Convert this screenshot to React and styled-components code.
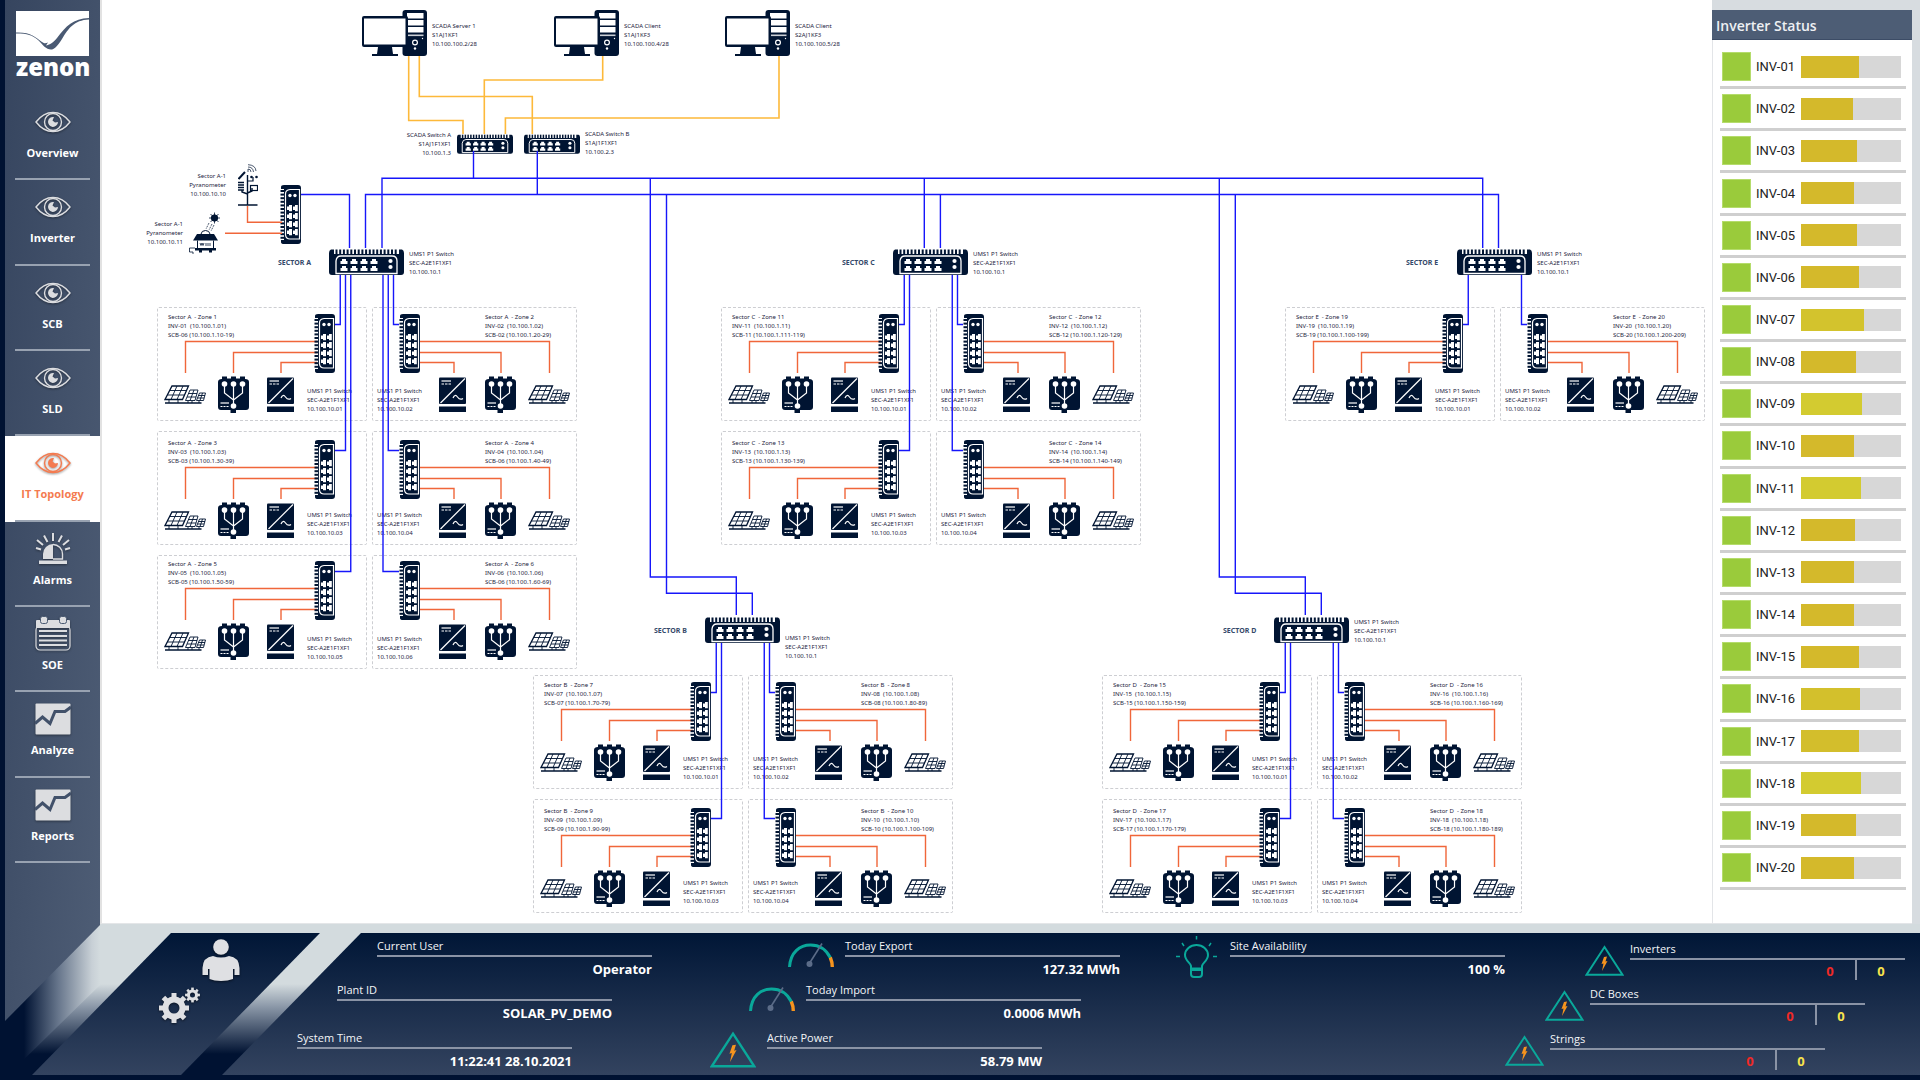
import React, { useState } from 'react';
import styled, { createGlobalStyle } from 'styled-components';

const NAVY = '#001432';
const ORANGE = '#f0663a';
const TEAL = '#0aa89a';

const GlobalStyle = createGlobalStyle`
  * { box-sizing: border-box; }
  body {
    margin: 0;
    background: #fff;
    font-family: 'Open Sans', 'Noto Sans', sans-serif;
  }
  button {
    border: 0;
    padding: 0;
    background: none;
    font: inherit;
    color: inherit;
    cursor: pointer;
  }
  svg { display: block; }
`;

const Shell = styled.div`
  display: grid;
  grid-template-columns: 100px minmax(0, 1fr) 208px;
  grid-template-rows: 1fr 156px;
  min-height: 100vh;
`;

/* ---------- sidebar ---------- */

const Sidebar = styled.aside`
  grid-column: 1;
  grid-row: 1 / 3;
  z-index: 1;
  position: relative;
  border-left: 5px solid #001232;

  &::before {
    content: '';
    position: absolute;
    inset: 0;
    z-index: -1;
    background: linear-gradient(95deg, #36455f, #4f5e76);
    clip-path: polygon(0 0, 100% 0, 100% calc(100% - 155px), 0 calc(100% - 59px));
  }
`;

const Brand = styled.div`
  height: 95px;
  padding: 11px 11px 0;
`;

const BrandName = styled.div`
  color: #fff;
  font-size: 24px;
  font-weight: 800;
  line-height: 20px;
  text-align: center;
`;

const Nav = styled.nav`
  display: flex;
  flex-direction: column;
  height: 768px;
`;

const NavItem = styled.button`
  flex: 1;
  display: flex;
  flex-direction: column;
  align-items: center;
  padding-top: 10px;
  font-size: 11px;
  font-weight: 700;
  line-height: 18px;
  color: ${({ $active }) => ($active ? '#f47b50' : '#fff')};
  background: ${({ $active }) => ($active ? '#fff' : 'transparent')};
`;

const NavIcon = styled.span`
  display: flex;
  align-items: center;
  height: 34px;
  margin-bottom: 5px;
  color: ${({ $active }) => ($active ? '#f47b50' : '#dcdde0')};
  filter: drop-shadow(0 1px 1px rgba(0, 0, 0, 0.4));
`;

const NavRule = styled.span`
  width: 75px;
  height: 2px;
  margin-top: auto;
  background: #98a2b1;
`;

/* ---------- topology ---------- */

const Stage = styled.main`
  position: relative;
  overflow: hidden;
  border-left: 2px solid #e2e2e2;
  border-bottom: 1px solid #e4e6e8;
  color: #1c2340;
  font-family: 'Noto Sans', sans-serif;
  font-size: 6px;
  line-height: 9px;
`;

const Wires = styled.svg`
  position: absolute;
  left: 0;
  top: 0;
  width: 100%;
  height: 100%;
  fill: none;
  stroke-width: 1.4;
  pointer-events: none;
`;

const Node = styled.div`
  position: absolute;
  left: ${({ $x }) => $x}px;
  top: ${({ $y }) => $y}px;
`;

const Caption = styled(Node)`
  white-space: pre;
  text-align: ${({ $right }) => ($right ? 'right' : 'left')};
  width: ${({ $right }) => ($right ? '80px' : 'auto')};
`;

const SectorName = styled(Node)`
  color: #34496a;
  font-size: 7px;
  font-weight: 700;
`;

const ZoneBox = styled(Node)`
  width: ${({ $w }) => $w}px;
  height: 114px;
  border: 1px dashed #cdced2;
  border-radius: 2px;
`;

const ZoneWires = styled.svg`
  position: absolute;
  left: 0;
  top: 0;
  fill: none;
  stroke: ${ORANGE};
  stroke-width: 1.4;
`;

/* ---------- inverter status ---------- */

const StatusColumn = styled.aside`
  padding: 10px 8px 0 0;
  background: #d7dce0;
`;

const StatusPanel = styled.section`
  height: 100%;
  background: #fff;
  border-left: 1px solid #e3e5e8;
  border-bottom: 1px solid #e3e5e8;
`;

const StatusTitle = styled.h2`
  margin: 0 0 0 -1px;
  height: 30px;
  padding-left: 4px;
  background: #4d5d75;
  border-bottom: 1px solid #3c4c66;
  color: #eef0f3;
  font-size: 14px;
  font-weight: 600;
  line-height: 31px;
`;

const StatusList = styled.ul`
  display: flex;
  flex-direction: column;
  height: 843px;
  margin: 7px 6px 0 7px;
  padding: 0;
  list-style: none;
`;

const StatusRow = styled.li`
  flex: 1;
  display: flex;
  align-items: center;
  padding: 0 5px 0 2px;
  border-bottom: 3px solid #cfcfcf;
`;

const Lamp = styled.span`
  width: 29px;
  height: 29px;
  background: #9acb3b;
  border: 1px solid #b5dc6c;
`;

const InverterName = styled.span`
  width: 50px;
  padding-left: 5px;
  font-family: Roboto, sans-serif;
  font-size: 13px;
  color: #222;
`;

const Track = styled.span`
  flex: 1;
  height: 22px;
  background: #d7d7d7;
`;

const Fill = styled.span`
  display: block;
  height: 100%;
  background: ${({ $tone }) => $tone};
`;

/* ---------- footer ---------- */

const Footer = styled.footer`
  grid-column: 1 / 4;
  grid-row: 2;
  position: relative;
  display: flex;
  padding-top: 9px;
  border-bottom: 5px solid #001232;
  background: linear-gradient(180deg, #d3dbde 0, #d3dbde 60px, #8794a5 84px, #001232 130px);

  &::before {
    content: '';
    position: absolute;
    left: 0;
    top: 0;
    width: 100px;
    height: 151px;
    background: linear-gradient(90deg, #001232 24px, #66758b 58px, #c8d0d6 92px, #d3dbde 100px);
    clip-path: polygon(0 0, 100% 0, 100% 61px, 12px 147px, 0 100%);
  }
`;

const Slab = styled.div`
  background: linear-gradient(180deg, #001636, #33435f);
`;

const Actions = styled(Slab)`
  flex: none;
  width: 288px;
  margin-left: 32px;
  display: flex;
  flex-direction: column;
  align-items: flex-start;
  gap: 6px;
  padding: 6px 0 0 127px;
  clip-path: polygon(139px 0, 100% 0, 149px 100%, 0 100%);
`;

const ActionButton = styled.button`
  margin-left: ${({ $indent }) => $indent}px;
  filter: drop-shadow(0 1px 1px rgba(0, 0, 0, 0.5));
`;

const Readings = styled(Slab)`
  flex: 1;
  display: flex;
  margin-left: -98px;
  padding: 3px 15px 0 75px;
  clip-path: polygon(139px 0, 100% 0, 100% 100%, 0 100%);
`;

const Group = styled.div`
  display: grid;
  grid-template-rows: 44px 48px 44px;
  align-content: start;
  margin-right: ${({ $gap }) => $gap}px;
`;

const CounterGroup = styled.div`
  display: grid;
  grid-template-rows: 45px 45px 45px;
  align-content: start;
  margin-left: auto;
  padding-top: 3px;
`;

const Reading = styled.div`
  display: flex;
  margin-left: ${({ $indent }) => $indent}px;
`;

const ReadingIcon = styled.span`
  display: flex;
  align-items: center;
  justify-content: center;
  width: ${({ $w }) => $w}px;
  height: ${({ $h }) => $h}px;
  margin-right: ${({ $gap }) => $gap}px;
`;

const Field = styled.div`
  width: 275px;
  color: #f3f5f8;
`;

const FieldLabel = styled.div`
  height: 21px;
  border-bottom: 2px solid #8a93a5;
  font-size: 11px;
  line-height: 20px;
`;

const FieldValue = styled.div`
  color: #fff;
  font-size: 13px;
  font-weight: 700;
  line-height: 24px;
  text-align: right;
`;

const Counters = styled.div`
  display: flex;
  justify-content: flex-end;
`;

const Counter = styled.div`
  width: 50px;
  height: 20px;
  border-left: ${({ $divided }) => ($divided ? '2px solid #8a93a5' : '0')};
  color: ${({ $color }) => $color};
  font-size: 13px;
  font-weight: 700;
  line-height: 23px;
  text-align: center;
`;

/* ---------- navigation icons ---------- */

const EyeIcon = () => (
  <svg width="36" height="22" viewBox="0 0 36 22" fill="none" stroke="currentColor" strokeWidth="1.4">
    <path d="M1 11C6 4.500 12 1.500 18 1.500S30 4.500 35 11C30 17.500 24 20.500 18 20.500S6 17.500 1 11Z" />
    <circle cx="18" cy="11" r="8.500" />
    <path d="M19 6A5 5 0 1 0 23 11L20 11.500L17.500 9.500Z" fill="currentColor" stroke="none" />
  </svg>
);

const AlarmIcon = () => (
  <svg width="36" height="32" viewBox="0 0 36 32" fill="none" stroke="currentColor" strokeWidth="2">
    <path d="M18 0V8M9 2.500L12.500 9M27 2.500L23.500 9M2 7L8 12M34 7L28 12M1 15L6 16.500M35 15L30 16.500" />
    <path d="M8 26V21A10 10 0 0 1 18 11V26Z" fill="currentColor" stroke="none" />
    <path d="M18 11.500A9.500 9.500 0 0 1 27.500 21V26H18" strokeWidth="1.400" />
    <path d="M4 27.500H32V31H4Z" fill="currentColor" stroke="none" />
  </svg>
);

const SoeIcon = () => (
  <svg width="36" height="35" viewBox="0 0 36 35">
    <path d="M1 5Q1 4 2 4H34Q35 4 35 5V12H1Z" fill="currentColor" />
    <rect x="1" y="10" width="34" height="24" rx="4" fill="none" stroke="currentColor" strokeWidth="1.200" />
    <path d="M4 15H32M4 20H32M4 24.500H32M4 29H32" stroke="currentColor" strokeWidth="2" />
    <rect x="5.500" y="0.500" width="7" height="7" rx="2" fill="currentColor" stroke="#4a5a72" />
    <rect x="24.500" y="0.500" width="7" height="7" rx="2" fill="currentColor" stroke="#4a5a72" />
  </svg>
);

const TrendIcon = () => (
  <svg width="36" height="32" viewBox="0 0 36 32">
    <rect x="0.500" y="0.500" width="35" height="31" rx="1" fill="currentColor" />
    <path d="M0 20.500L7.500 14L15 20.500L20 8.500H30L36 4" fill="none" stroke="#42516a" strokeWidth="3" />
  </svg>
);

const BrandMark = () => (
  <svg width="73" height="46" viewBox="0 0 73 46">
    <rect width="73" height="45" fill="#fff" />
    <path
      d="M0 21.500C15 21 19 26 26 31C29 33 30 32 32 31.500L30 34.500C33 34 37 32 41 27C50 15 57 7.500 73 7V8.500C58 9 52 18 46 28C41 36 38 38.500 35 38.500C30 38.500 27 34 22 29C16 24 12 22.500 0 22.500Z"
      fill="#4a5a73"
    />
  </svg>
);

/* ---------- device drawings ---------- */

const Computer = () => (
  <svg width="65" height="46" viewBox="0 0 65 46" fill={NAVY}>
    <rect x="40.500" width="24.500" height="46" rx="3" />
    <g fill="#fff">
      <rect x="45" y="3" width="16.500" height="5.500" />
      <rect x="45" y="10" width="16.500" height="5.500" />
      <rect x="45" y="17" width="16.500" height="5.500" />
      <rect x="45" y="24.500" width="16.500" height="1.600" opacity="0.8" />
      <circle cx="60.500" cy="28.500" r="0.700" />
      <circle cx="53" cy="38.500" r="1.200" />
    </g>
    <circle cx="53" cy="32.500" r="2.400" fill="none" stroke="#fff" strokeWidth="1.200" />
    <rect y="6" width="46" height="31" rx="2" />
    <rect x="2" y="8.500" width="41.500" height="26" fill="#fff" />
    <path d="M16 37H30L31 44H36V46H10V44H15Z" />
  </svg>
);

const FINS = Array.from({ length: 17 }, (_, i) => i);

const RackSwitch = ({ width = 75, height = 26 }) => (
  <svg width={width} height={height} viewBox="0 0 75 26" fill={NAVY}>
    <path d="M2 0.500H5V5H70V0.500H73Q75 1 75 4V23Q75 26 72 26H3Q0 26 0 23V4Q0 1 2 0.500Z" />
    {FINS.map((i) => (
      <rect key={i} x={6.5 + i * 3.7} y="0.500" width="2" height="5" />
    ))}
    <path d="M7 24.500V12Q7.500 7 12 7H63Q68 7 68 12V24.500Z" fill="none" stroke="#fff" strokeWidth="1.300" />
    <g fill="#fff">
      {[0, 1, 2, 3].map((i) => (
        <React.Fragment key={i}>
          <path d={`M${11.5 + i * 10} 15V12H${13 + i * 10}V10H${17 + i * 10}V12H${18.5 + i * 10}V15Z`} />
          <path d={`M${11.5 + i * 10} 22V19H${13 + i * 10}V17H${17 + i * 10}V19H${18.5 + i * 10}V22Z`} />
        </React.Fragment>
      ))}
      <circle cx="61.500" cy="12" r="2.100" />
      <circle cx="61.500" cy="18" r="2.100" />
    </g>
  </svg>
);

const FieldSwitch = () => (
  <svg width="21" height="59" viewBox="0 0 21 59" fill={NAVY}>
    <path d="M1 2Q1 0 4 0H18Q21 0 21 3V56Q21 59 18 59H4Q1 59 1 57V55H4V4H1Z" />
    {Array.from({ length: 14 }, (_, i) => (
      <rect key={i} x="0.500" y={5 + i * 3.6} width="4" height="2" />
    ))}
    <path d="M19.500 4.500H10Q5.500 5 5.500 9V50Q6 54 10 54H19.500Z" fill="none" stroke="#fff" strokeWidth="1.200" />
    <g fill="#fff">
      <circle cx="10" cy="10.500" r="1.700" />
      <circle cx="15" cy="10.500" r="1.700" />
      {[0, 1, 2, 3].map((i) => (
        <React.Fragment key={i}>
          <path d={`M12 ${20 + i * 8}H9V${21.5 + i * 8}H7V${25 + i * 8}H9V${26.3 + i * 8}H12Z`} />
          <path d={`M17.800 ${20 + i * 8}H15V${21.5 + i * 8}H13V${25 + i * 8}H15V${26.3 + i * 8}H17.800Z`} />
        </React.Fragment>
      ))}
    </g>
  </svg>
);

const SolarPanels = () => (
  <svg width="42" height="20" viewBox="0 0 42 20" fill="none" stroke={NAVY} strokeWidth="0.900">
    <path d="M8 1H24.500L18.500 14.500H1Z" strokeWidth="1.300" />
    <path d="M13 1L7 14.500M19 1L13 14.500M6 5.500H22.500M3.500 10H20.500" />
    <path d="M26 5H34L31 15.500H21.500Z" />
    <path d="M30 5L26 15.500M24.500 8.500H33M23 12H32" />
    <path d="M35.500 8H41.500L39.500 15.500H32.500Z" />
    <path d="M38.500 8L36 15.500M34.500 10.500H41M33.500 13H40" />
    <path d="M1 18H37.500" strokeWidth="1.600" />
    <path d="M5 15V18M14 15V18M24 16V18M28 16V18M35 16V18" />
  </svg>
);

const CombinerBox = () => (
  <svg width="31" height="37" viewBox="0 0 31 37" fill={NAVY}>
    <path d="M4 0.500H9V2.500H13V0.500H18V2.500H22V0.500H27V3Q31 3 31 6V31Q31 34 28 34H18V37H12.500V34H3Q0 34 0 31V6Q0 3 4 3Z" />
    <g stroke="#fff" fill="none" strokeWidth="1.200">
      <path d="M6.500 8V17L15.500 24M24.500 8V17L15.500 24M15.500 8V30" />
      <path d="M2.500 27H11" />
      <path d="M2.500 30.500H11" strokeDasharray="2 1" />
    </g>
    <g fill="#fff">
      <circle cx="6.500" cy="8" r="2.800" />
      <circle cx="15.500" cy="8" r="2.800" />
      <circle cx="24.500" cy="8" r="2.800" />
      <circle cx="15.500" cy="30" r="2.800" />
    </g>
  </svg>
);

const InverterUnit = () => (
  <svg width="27" height="35" viewBox="0 0 27 35">
    <rect y="0.500" width="27" height="26.500" rx="1" fill={NAVY} />
    <rect y="29.500" width="27" height="5.500" fill={NAVY} />
    <g stroke="#fff" fill="none" strokeWidth="1.200">
      <path d="M1.500 26L26 1.500" />
      <path d="M2.500 4H12" />
      <path d="M2.500 7H12" strokeDasharray="2.500 1" />
      <path d="M14 21Q16 16.500 18.500 20T24 21.500" />
    </g>
  </svg>
);

const WeatherStation = () => (
  <svg width="20" height="42" viewBox="0 0 20 42" fill="none" stroke={NAVY} strokeWidth="1.200">
    <path d="M9.500 11V41M0 41H19.500M9.500 30L4 28V26M9.500 29L14 27V24" strokeWidth="1.400" />
    <path d="M0.500 15L7 8" strokeWidth="2" />
    <path d="M0 18.500H6M0 21H6M0 23.500H6M0 26H6" strokeWidth="1.600" />
    <rect x="12.500" y="21.500" width="7" height="5" />
    <path d="M9.500 17H15V13" />
    <circle cx="13.500" cy="13" r="1.300" fill={NAVY} stroke="none" />
    <circle cx="18.500" cy="13" r="1.300" fill={NAVY} stroke="none" />
    <path d="M10 8V5Q13 5 13 8M10 3Q15 3 15.500 8M10 0.700Q17.500 1 18 7" strokeWidth="0.700" />
  </svg>
);

const Pyranometer = () => (
  <svg width="32" height="42" viewBox="0 0 32 42" fill="none" stroke={NAVY}>
    <circle cx="25.500" cy="6" r="3.200" fill={NAVY} />
    <path d="M25.500 0.500V11.500M20 6H31M21.500 2L29.500 10M29.500 2L21.500 10" strokeWidth="0.800" />
    <path d="M20 11L17 17M23 12L20 18M25 13L22 19" strokeWidth="0.700" strokeDasharray="2 1" />
    <path d="M12 22Q12.500 18.500 16.500 18.500T21 22" />
    <path d="M8 22H25L29 28.500H4Z" fill={NAVY} stroke="none" />
    <path d="M8.500 28.500V36M24.500 28.500V36" />
    <path d="M11 31L12 33.500L13 31L14 33.500L15 31M17 31V34M19 31V34M21 31V34" strokeWidth="0.800" />
    <path d="M6 36H27V38.500H6ZM10 38.500H13V40.500H10ZM20 38.500H23V40.500H20Z" fill={NAVY} stroke="none" />
    <path d="M6 36H0.500V40H4V42" strokeWidth="0.800" />
  </svg>
);

/* ---------- footer icons ---------- */

const GaugeIcon = () => (
  <svg width="46" height="24" viewBox="0 0 46 24" fill="none">
    <path d="M1.500 24C2.500 9 12 2 22.500 2S39 8 42.500 15" stroke={TEAL} strokeWidth="3" />
    <path d="M42.300 14.500Q44.300 19 44.300 24" stroke="#f7941e" strokeWidth="3.400" />
    <path d="M21 21L34 0.500" stroke="#5b6c88" strokeWidth="1.600" />
    <circle cx="21.500" cy="21" r="3" fill="#5b6c88" />
  </svg>
);

const HazardIcon = ({ width = 39, height = 31 }) => (
  <svg width={width} height={height} viewBox="0 0 39 31" fill="none">
    <path d="M19.500 2L37.500 29.700H1.500Z" stroke={TEAL} strokeWidth="2" />
    <path d="M19 12L22 11.500L20.500 16.500L22.500 16L17 26L18.500 18.500L16.500 19Z" fill="#f7941e" />
  </svg>
);

const BulbIcon = () => (
  <svg width="41" height="43" viewBox="0 0 41 43" fill="none" stroke={TEAL} strokeWidth="2">
    <path d="M15 32.500V30C14.500 27 9 24.500 9 19A11.500 10 0 0 1 32 19C32 24.500 26.500 27 26 30V32.500Z" />
    <path d="M15 32.500V38Q15 41 18 41H23Q26 41 26 38V32.500M15 34H26" />
    <path d="M20.500 0V3.500M6 7L8 10M35 7L33 10M0 20.500H4M37 20.500H41" strokeWidth="1.500" />
  </svg>
);

const UserIcon = () => (
  <svg width="38" height="42" viewBox="0 0 38 42" fill="#dfe0e3">
    <circle cx="19" cy="8" r="7.800" />
    <path d="M11 17Q19 20 27 17Q37 18 37.500 29V36H32.500V30H31V40Q26 42 19 42T7.500 40V30H6V36H0.500V29Q1 18 11 17Z" />
  </svg>
);

const TEETH = [0, 45, 90, 135, 180, 225, 270, 315];

const Gear = ({ cx, cy, r, hole, tooth }) => (
  <g transform={`translate(${cx} ${cy})`}>
    <circle r={(r + hole) / 2} fill="none" stroke="#dfe0e3" strokeWidth={r - hole} />
    {TEETH.map((a) => (
      <rect key={a} x={-tooth / 2} y={-r - tooth * 0.7} width={tooth} height={tooth} fill="#dfe0e3" transform={`rotate(${a})`} />
    ))}
  </g>
);

const GearsIcon = () => (
  <svg width="42" height="37" viewBox="0 0 42 37">
    <Gear cx={15} cy={21} r={11.5} hole={5.5} tooth={5} />
    <Gear cx={33.5} cy={8} r={5.6} hole={2.5} tooth={2.6} />
  </svg>
);

/* ---------- data ---------- */

const navItems = [
  { label: 'Overview', Icon: EyeIcon },
  { label: 'Inverter', Icon: EyeIcon },
  { label: 'SCB', Icon: EyeIcon },
  { label: 'SLD', Icon: EyeIcon },
  { label: 'IT Topology', Icon: EyeIcon },
  { label: 'Alarms', Icon: AlarmIcon },
  { label: 'SOE', Icon: SoeIcon },
  { label: 'Analyze', Icon: TrendIcon },
  { label: 'Reports', Icon: TrendIcon },
];

const GOLD = '#d4b92b';
const YELLOW = '#d3cb30';

const inverters = [
  [58, GOLD], [52, GOLD], [56, GOLD], [53, GOLD], [56, GOLD],
  [58, GOLD], [63, '#d3c32d'], [55, GOLD], [61, YELLOW], [53, GOLD],
  [60, YELLOW], [54, GOLD], [53, GOLD], [53, GOLD], [58, GOLD],
  [59, '#d3c02c'], [58, '#d3be2c'], [60, YELLOW], [55, GOLD], [53, GOLD],
];

// x / y is the top left corner of the sector's first zone box
const sectors = [
  { name: 'A', x: 55, y: 307, first: 1, captionY: -57, scb: ['06 (10.100.1.10-19)', '02 (10.100.1.20-29)', '03 (10.100.1.30-39)', '06 (10.100.1.40-49)', '05 (10.100.1.50-59)', '06 (10.100.1.60-69)'] },
  { name: 'B', x: 431, y: 675, first: 7, captionY: -41, scb: ['07 (10.100.1.70-79)', '08 (10.100.1.80-89)', '09 (10.100.1.90-99)', '10 (10.100.1.100-109)'] },
  { name: 'C', x: 619, y: 307, first: 11, captionY: -57, scb: ['11 (10.100.1.111-119)', '12 (10.100.1.120-129)', '13 (10.100.1.130-139)', '14 (10.100.1.140-149)'] },
  { name: 'D', x: 1000, y: 675, first: 15, captionY: -57, scb: ['15 (10.100.1.150-159)', '16 (10.100.1.160-169)', '17 (10.100.1.170-179)', '18 (10.100.1.180-189)'] },
  { name: 'E', x: 1183, y: 307, first: 19, captionY: -57, scb: ['19 (10.100.1.100-199)', '20 (10.100.1.200-209)'] },
];

const ROW_PITCH = 124;
const ROW_SHIFT = [0, 2, -1];

const computers = [
  { x: 260, text: 'SCADA Server 1\nS1AJ1KF1\n10.100.100.2/28' },
  { x: 452, text: 'SCADA Client\nS1AJ1KF3\n10.100.100.4/28' },
  { x: 623, text: 'SCADA Client\nS2AJ1KF3\n10.100.100.5/28' },
];

const pad = (n) => String(n).padStart(2, '0');

/* ---------- parts ---------- */

const Zone = ({ sector, index }) => {
  const right = index % 2 === 1;
  const row = Math.floor(index / 2);
  const dy = ROW_SHIFT[row];
  const no = pad(sector.first + index);
  const w = right ? 205 : 210;
  const at = right
    ? { caption: 112, sw: 26, solar: 155, box: 112, inv: 66, label: 4 }
    : { caption: 10, sw: 156, solar: 6, box: 60, inv: 109, label: 149 };

  return (
    <ZoneBox $x={sector.x + (right ? 215 : 0)} $y={sector.y + row * ROW_PITCH} $w={w}>
      <ZoneWires width={w} height="112">
        <g transform={`translate(-1 ${dy - 1})`}>
          {right ? (
            <path d="M45 34.500H177.500V66M45 45.500H129V66M45 55.500H82V66" />
          ) : (
            <path d="M160 34.500H28.500V66M160 45.500H76.500V66M160 55.500H124V66" />
          )}
        </g>
      </ZoneWires>
      <Caption $x={at.caption} $y={5 + dy}>
        {`Sector ${sector.name}  - Zone ${sector.first + index}\nINV-${no}  (10.100.1.${no})\nSCB-${sector.scb[index]}`}
      </Caption>
      <Node $x={at.sw} $y={6 + dy}><FieldSwitch /></Node>
      <Node $x={at.solar} $y={77 + dy}><SolarPanels /></Node>
      <Node $x={at.box} $y={68 + dy}><CombinerBox /></Node>
      <Node $x={at.inv} $y={69 + dy}><InverterUnit /></Node>
      <Caption $x={at.label} $y={79}>{`UMS1 P1 Switch\nSEC-A2E1F1XF1\n10.100.10.${pad(index + 1)}`}</Caption>
    </ZoneBox>
  );
};

const Sector = ({ sector }) => (
  <>
    <SectorName $x={sector.x + 121} $y={sector.y - 49}>SECTOR {sector.name}</SectorName>
    <Node $x={sector.x + 172} $y={sector.y - 58}><RackSwitch /></Node>
    <Caption $x={sector.x + 252} $y={sector.y + sector.captionY}>
      {'UMS1 P1 Switch\nSEC-A2E1F1XF1\n10.100.10.1'}
    </Caption>
    {sector.scb.map((scb, i) => (
      <Zone key={scb} sector={sector} index={i} />
    ))}
  </>
);

const uplinks = (sector) =>
  sector.scb
    .map((_, i) => {
      const row = Math.floor(i / 2);
      const y = sector.y + row * ROW_PITCH + ROW_SHIFT[row] + 17.5;
      return i % 2
        ? `M${sector.x + 236.5 - row * 5.25} ${sector.y - 32}V${y}H${sector.x + 242}`
        : `M${sector.x + 183.25 + row * 5.25} ${sector.y - 32}V${y}H${sector.x + 178}`;
    })
    .join('');

const Topology = () => (
  <Stage>
    {computers.map((c) => (
      <React.Fragment key={c.x}>
        <Node $x={c.x} $y={10}><Computer /></Node>
        <Caption $x={c.x + 70} $y={22}>{c.text}</Caption>
      </React.Fragment>
    ))}
    <Caption $x={269} $y={131} $right>{'SCADA Switch A\nS1AJ1F1XF1\n10.100.1.3'}</Caption>
    <Node $x={355} $y={134}><RackSwitch width={56} height={20} /></Node>
    <Node $x={422} $y={134}><RackSwitch width={56} height={20} /></Node>
    <Caption $x={483} $y={130}>{'SCADA Switch B\nS1AJ1F1XF1\n10.100.2.3'}</Caption>

    <Caption $x={44} $y={172} $right>{'Sector A-1\nPyranometer\n10.100.10.10'}</Caption>
    <Node $x={136} $y={164}><WeatherStation /></Node>
    <Caption $x={1} $y={220} $right>{'Sector A-1\nPyranometer\n10.100.10.11'}</Caption>
    <Node $x={87} $y={212}><Pyranometer /></Node>
    <Node $x={178} $y={185}><FieldSwitch /></Node>

    {sectors.map((s) => (
      <Sector key={s.name} sector={s} />
    ))}

    <Wires>
      <g stroke="#fdb93a" strokeWidth="1.600">
        <path d="M306.700 56V120.500H361V134M317.300 56V96.500H430.300V134" />
        <path d="M500.700 56V80H382.300V134M677 56V118H403.400V134" />
      </g>
      <path stroke={ORANGE} d="M145.500 206V222.300H180M123 233.300H180" />
      <g stroke="#1616fa">
        <path d="M371.500 151V178.300M280 248V178.300H1380.700V248" />
        <path d="M435.300 151V194.500M263.500 248V194.500H1396.500V248M199 194.500H247.500V248" />
        <path d="M548.300 178.300V577H634.300V615M564.500 194.500V593.300H650.300V615" />
        <path d="M822.300 178.300V248M838.400 194.500V248" />
        <path d="M1117.300 178.300V577H1203.300V615M1133.300 194.500V593.300H1219.300V615" />
        {sectors.map((s) => (
          <path key={s.name} d={uplinks(s)} />
        ))}
      </g>
    </Wires>
  </Stage>
);

const Value = ({ icon, iconHeight = 43, label, value, indent = 0 }) => (
  <Reading $indent={indent}>
    {icon && <ReadingIcon $w={46} $h={iconHeight} $gap={11}>{icon}</ReadingIcon>}
    <Field>
      <FieldLabel>{label}</FieldLabel>
      <FieldValue>{value}</FieldValue>
    </Field>
  </Reading>
);

const FaultCount = ({ label, indent }) => (
  <Reading $indent={indent}>
    <ReadingIcon $w={39} $h={43} $gap={6}><HazardIcon /></ReadingIcon>
    <Field>
      <FieldLabel>{label}</FieldLabel>
      <Counters>
        <Counter $color="#f02a26">0</Counter>
        <Counter $color="#f8e44c" $divided>0</Counter>
      </Counters>
    </Field>
  </Reading>
);

const App = () => {
  const [page, setPage] = useState('IT Topology');

  return (
    <>
      <GlobalStyle />
      <Shell>
        <Sidebar>
          <Brand>
            <BrandMark />
            <BrandName>zenon</BrandName>
          </Brand>
          <Nav>
            {navItems.map(({ label, Icon }) => (
              <NavItem key={label} type="button" $active={page === label} onClick={() => setPage(label)}>
                <NavIcon $active={page === label}><Icon /></NavIcon>
                {label}
                <NavRule />
              </NavItem>
            ))}
          </Nav>
        </Sidebar>

        <Topology />

        <StatusColumn>
          <StatusPanel>
            <StatusTitle>Inverter Status</StatusTitle>
            <StatusList>
              {inverters.map(([level, tone], i) => (
                <StatusRow key={i}>
                  <Lamp />
                  <InverterName>INV-{pad(i + 1)}</InverterName>
                  <Track>
                    <Fill $tone={tone} style={{ width: `${level}%` }} />
                  </Track>
                </StatusRow>
              ))}
            </StatusList>
          </StatusPanel>
        </StatusColumn>

        <Footer>
          <Actions>
            <ActionButton type="button" aria-label="User" $indent={43}><UserIcon /></ActionButton>
            <ActionButton type="button" aria-label="Settings" $indent={0}><GearsIcon /></ActionButton>
          </Actions>
          <Readings>
            <Group $gap={58}>
              <Value label="Current User" value="Operator" indent={80} />
              <Value label="Plant ID" value="SOLAR_PV_DEMO" indent={40} />
              <Value label="System Time" value="11:22:41 28.10.2021" />
            </Group>
            <Group $gap={53}>
              <Value icon={<GaugeIcon />} iconHeight={37} label="Today Export" value="127.32 MWh" indent={78} />
              <Value icon={<GaugeIcon />} iconHeight={37} label="Today Import" value="0.0006 MWh" indent={39} />
              <Value icon={<HazardIcon width={46} height={37} />} label="Active Power" value="58.79 MW" />
            </Group>
            <Group $gap={0}>
              <Value icon={<BulbIcon />} label="Site Availability" value="100 %" />
            </Group>
            <CounterGroup>
              <FaultCount label="Inverters" indent={80} />
              <FaultCount label="DC Boxes" indent={40} />
              <FaultCount label="Strings" indent={0} />
            </CounterGroup>
          </Readings>
        </Footer>
      </Shell>
    </>
  );
};

export default App;
